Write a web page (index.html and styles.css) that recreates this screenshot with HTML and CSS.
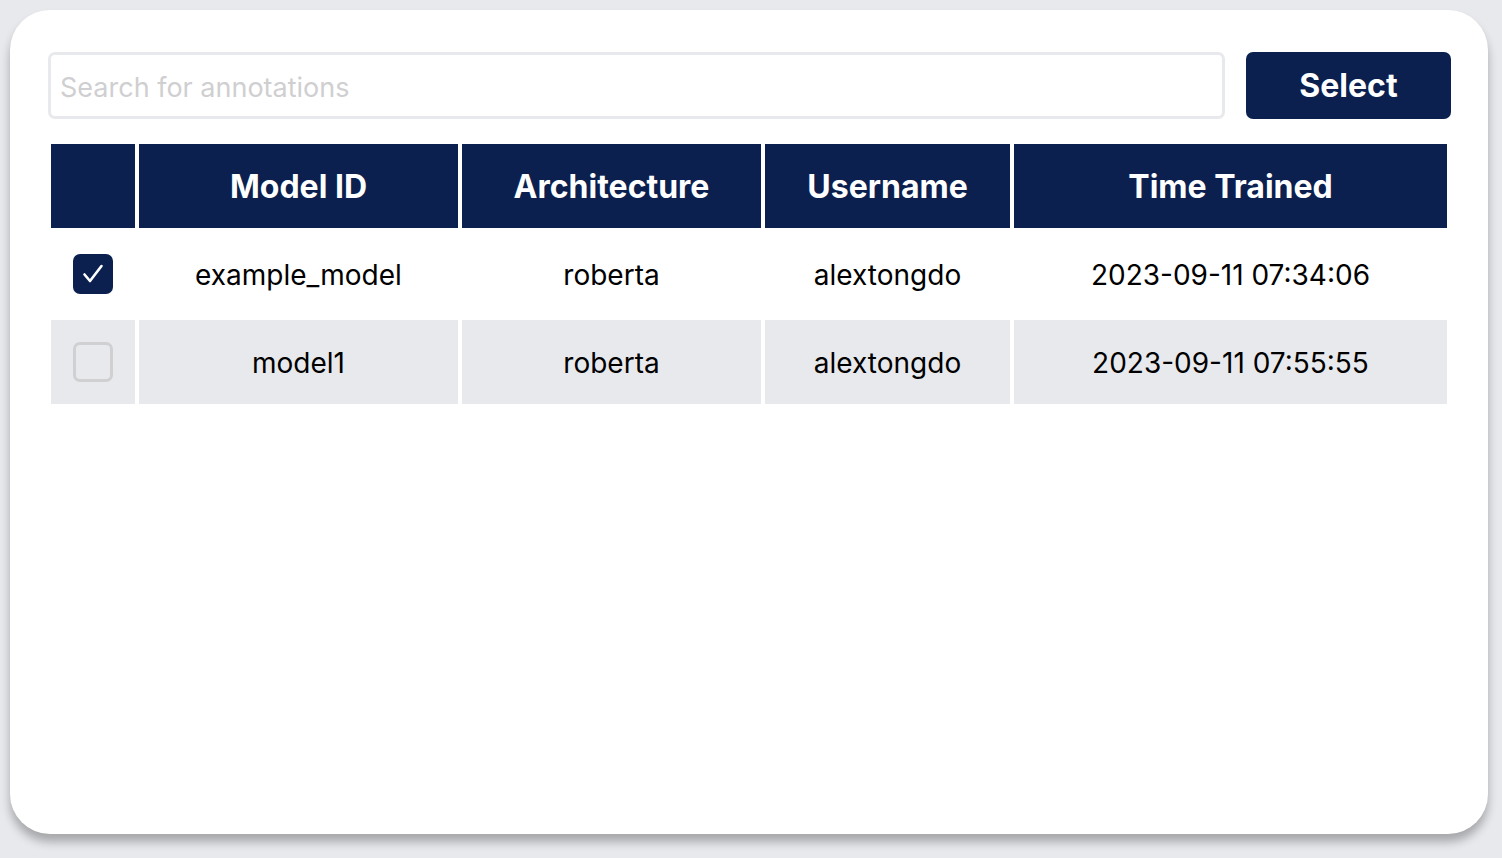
FILE: index.html
```html
<!DOCTYPE html>
<html>
<head>
<meta charset="utf-8">
<link rel="stylesheet" href="styles.css">
</head>
<body>
<div class="card">
  <div class="toolbar">
    <input class="search" type="text" placeholder="Search for annotations">
    <button class="select-btn">Select</button>
  </div>
  <table class="models">
    <colgroup>
      <col class="c-check">
      <col class="c-id">
      <col class="c-arch">
      <col class="c-user">
      <col class="c-time">
    </colgroup>
    <thead>
      <tr>
        <th></th>
        <th>Model ID</th>
        <th>Architecture</th>
        <th>Username</th>
        <th>Time Trained</th>
      </tr>
    </thead>
    <tbody>
      <tr class="row">
        <td class="check-cell"><span class="box checked"><svg class="tick" width="26" height="26" viewBox="0 0 26 26"><path d="M4.5 13.5 L10 20 L21.5 5" fill="none" stroke="#fff" stroke-width="2.6" stroke-linecap="round" stroke-linejoin="round"/></svg></span></td>
        <td class="txt">example_model</td>
        <td class="txt">roberta</td>
        <td class="txt">alextongdo</td>
        <td class="txt">2023-09-11 07:34:06</td>
      </tr>
      <tr class="row alt">
        <td class="check-cell"><span class="box"></span></td>
        <td class="txt">model1</td>
        <td class="txt">roberta</td>
        <td class="txt">alextongdo</td>
        <td class="txt">2023-09-11 07:55:55</td>
      </tr>
    </tbody>
  </table>
</div>
</body>
</html>
```

FILE: styles.css
```css
html, body {
  margin: 0;
  padding: 0;
}
body {
  background: #e8e9ed;
  font-family: Inter, "Liberation Sans", sans-serif;
  padding: 10px;
  height: 858px;
  box-sizing: border-box;
}
.card {
  background: #fff;
  width: 1478px;
  height: 824px;
  border-radius: 40px;
  box-sizing: border-box;
  padding: 42px 37px 0 37px;
  box-shadow: 0 8px 10px rgba(0, 0, 0, 0.28);
}
.toolbar {
  display: flex;
  gap: 21px;
  height: 67px;
  margin-left: 1px;
}
.search {
  flex: 1;
  height: 67px;
  box-sizing: border-box;
  border: 3px solid #e8e9ed;
  border-radius: 7px;
  padding: 4px 9px 0 9px;
  font-family: Inter, "Liberation Sans", sans-serif;
  font-size: 27px;
  color: #222;
  outline: none;
}
.search::placeholder {
  color: #cfcfd1;
}
.select-btn {
  width: 205px;
  height: 67px;
  background: #0b204f;
  color: #fff;
  border: none;
  border-radius: 7px;
  font-family: Inter, "Liberation Sans", sans-serif;
  font-weight: 700;
  font-size: 32px;
  padding: 0;
}
.models {
  margin-top: 21px;
  width: 1404px;
  border-collapse: separate;
  border-spacing: 4px;
  table-layout: fixed;
}
.c-check { width: 84px; }
.c-id { width: 319px; }
.c-arch { width: 299px; }
.c-user { width: 245px; }
.c-time { width: 433px; }
.models th {
  background: #0b204f;
  color: #fff;
  font-weight: 700;
  font-size: 32px;
  height: 84px;
  padding: 0;
  text-align: center;
}
.models td {
  height: 84px;
  padding: 0;
  text-align: center;
  font-size: 28px;
  color: #000;
}
.models td.txt {
  height: 82px;
  padding-top: 2px;
}
.row.alt td {
  background: #e8e9ed;
}
.check-cell {
  text-align: center;
}
.box {
  display: inline-flex;
  align-items: center;
  justify-content: center;
  width: 40px;
  height: 40px;
  box-sizing: border-box;
  border: 3px solid #d0d0d2;
  border-radius: 7px;
  vertical-align: middle;
}
.box.checked {
  background: #0b204f;
  border-color: #0b204f;
}
.tick {
  flex: none;
}
```
